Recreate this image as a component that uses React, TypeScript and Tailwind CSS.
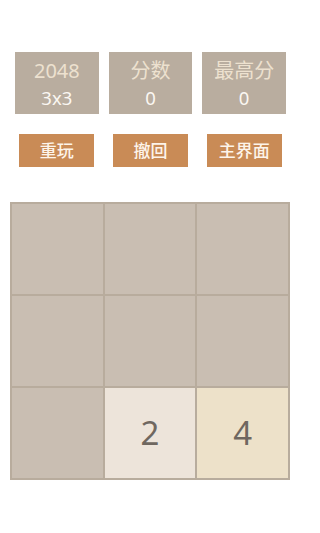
import React from "react";

const stats = [
  { label: "2048", value: "3x3" },
  { label: "分数", value: "0" },
  { label: "最高分", value: "0" },
];

const buttons = ["重玩", "撤回", "主界面"];

const cells: (number | null)[] = [null, null, null, null, null, null, null, 2, 4];

export default function App() {
  return (
    <div
      className="w-[300px] h-[533px] bg-white overflow-hidden"
      style={{ fontFamily: '"Noto Sans", "Noto Sans CJK SC", sans-serif' }}
    >
      <div className="ml-[15px] mt-[52px] w-[271px] grid grid-cols-3 gap-[10px]">
        {stats.map((s) => (
          <div
            key={s.label}
            className="h-[62px] bg-[#b9ad9f] flex flex-col items-center justify-center pt-[2px]"
          >
            <div className="text-[20px] leading-[27px] text-[#ede1cf]">{s.label}</div>
            <div className="text-[18.5px] leading-[27px] text-[#fbf7f2]">{s.value}</div>
          </div>
        ))}
      </div>
      <div className="ml-[15px] mt-[20px] w-[271px] grid grid-cols-3 gap-[10px]">
        {buttons.map((b) => (
          <div key={b} className="flex justify-center">
            <div className="w-[75px] h-[33px] bg-[#c98b56] flex items-center justify-center text-[17px] font-medium text-[#fdf4ea]">
              {b}
            </div>
          </div>
        ))}
      </div>
      <div className="ml-[10px] mt-[35px] w-[280px] h-[278px] bg-[#b8ac9d] p-[2px] grid grid-cols-3 grid-rows-3 gap-[2px]">
        {cells.map((v, i) => (
          <div
            key={i}
            className={
              "flex items-center justify-center text-[33px] text-[#6f6760] " +
              (v === 2 ? "bg-[#ede4da]" : v === 4 ? "bg-[#ede1c9]" : "bg-[#c9beb2]")
            }
          >
            {v ?? ""}
          </div>
        ))}
      </div>
    </div>
  );
}
